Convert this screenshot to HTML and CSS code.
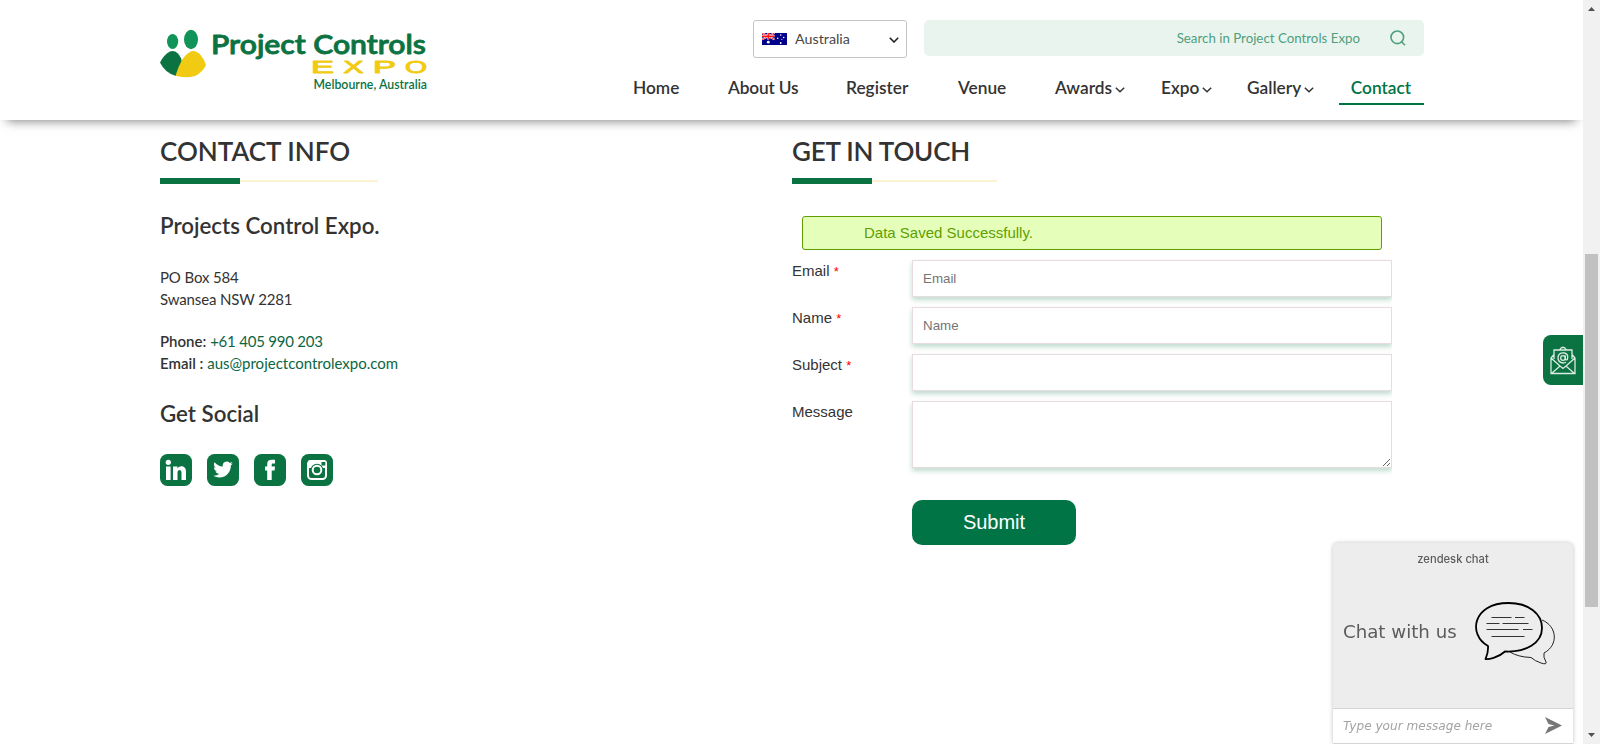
FILE: index.html
```html
<!DOCTYPE html>
<html lang="en">
<head>
<meta charset="utf-8">
<title>Project Controls Expo - Contact</title>
<link rel="stylesheet" href="styles.css">
</head>
<body>
<div class="window">
<div class="page">
  <header class="header">
    <svg class="logo" width="272" height="70" viewBox="160 25 272 70">
      <ellipse cx="172.600" cy="41.500" rx="5.600" ry="7.600" fill="#119457"/>
      <ellipse cx="191" cy="39.500" rx="7" ry="9.700" fill="#119457"/>
      <path d="M160 62.500Q164 54.500 170 51.500Q174 50 178 53.500 181.500 57.500 182 62L176 76Q165 73 160 62.500Z" fill="#0b7342"/>
      <path d="M175.500 75.800Q178 67 182 60 187 52.500 192 51Q197 50.500 201 55.500 205 60.500 206 65Q203 72 195 76 185 78.500 175.500 75.800Z" fill="#f1cb13"/>
      <text x="211" y="53.800" class="logo-name" textLength="215" lengthAdjust="spacingAndGlyphs">Project Controls</text>
      <g class="logo-expo">
        <text x="311" y="73" textLength="23" lengthAdjust="spacingAndGlyphs">E</text>
        <text x="343.500" y="73" textLength="20" lengthAdjust="spacingAndGlyphs">X</text>
        <text x="373" y="73" textLength="23" lengthAdjust="spacingAndGlyphs">P</text>
        <text x="405" y="73" textLength="22" lengthAdjust="spacingAndGlyphs">O</text>
      </g>
      <text x="313.500" y="89" class="logo-city" textLength="113.500">Melbourne, Australia</text>
    </svg>
    <div class="head-right">
      <div class="tools">
        <div class="country">
          <svg width="25" height="12" viewBox="0 0 25 12">
            <path fill="#00008b" d="M0 0h25v12H0z"/>
            <path d="M0 0l12.500 6.500M12.500 0L0 6.500" stroke="#fff" stroke-width="1.800"/>
            <path d="M0 0l12.500 6.500M12.500 0L0 6.500" stroke="#f22" stroke-width=".9"/>
            <path d="M6.200 0v6.500M0 3.200h12.500" stroke="#fff" stroke-width="2.200"/>
            <path d="M6.200 0v6.500M0 3.200h12.500" stroke="#f11" stroke-width="1.400"/>
            <g fill="#fff"><circle cx="6.300" cy="9.200" r="1.400"/><circle cx="18.700" cy="2" r=".8"/><circle cx="15.700" cy="5.200" r=".8"/><circle cx="21.700" cy="4.500" r=".8"/><circle cx="18.700" cy="10" r=".9"/><circle cx="19.900" cy="6.500" r=".5"/></g>
          </svg>
          <span>Australia</span>
          <svg class="country-arrow" width="10" height="6" viewBox="0 0 10 6"><path d="M.8.8L5 5 9.200.8" fill="none" stroke="#222" stroke-width="1.600"/></svg>
        </div>
        <div class="search">
          <span>Search in Project Controls Expo</span>
          <svg width="16" height="16" viewBox="0 0 16 16" fill="none" stroke="#4f9f7c" stroke-width="1.600"><circle cx="7.300" cy="7.300" r="6.300"/><path d="M11 11.200l4 4"/></svg>
        </div>
      </div>
      <nav class="nav">
        <a class="n-home">Home</a><a class="n-about">About Us</a><a class="n-register">Register</a><a class="n-venue">Venue</a>
        <a class="n-awards">Awards<svg class="chev" width="10" height="6" viewBox="0 0 10 6"><path d="M.8.8L5 4.800 9.200.8"/></svg></a>
        <a class="n-expo">Expo<svg class="chev" width="10" height="6" viewBox="0 0 10 6"><path d="M.8.8L5 4.800 9.200.8"/></svg></a>
        <a class="n-gallery">Gallery<svg class="chev" width="10" height="6" viewBox="0 0 10 6"><path d="M.8.8L5 4.800 9.200.8"/></svg></a>
        <a class="n-contact">Contact</a>
      </nav>
    </div>
  </header>

  <main class="content">
    <section class="info">
      <h2 class="title">CONTACT INFO</h2>
      <div class="rule rule-info"></div>
      <h3 class="sub">Projects Control Expo.</h3>
      <p class="address">PO Box 584<br>Swansea NSW 2281</p>
      <p class="reach"><b>Phone:</b> <a class="phone">+61 405 990 203</a><br><b>Email :</b> <a>aus@projectcontrolexpo.com</a></p>
      <h3 class="sub social-title">Get Social</h3>
      <div class="social">
        <svg width="32" height="32" viewBox="0 0 32 32"><rect width="32" height="32" rx="7.500" fill="#0b7342"/><g fill="#fff"><circle cx="8.300" cy="8.300" r="2.600"/><path d="M6 12.500h4.600V26H6zM13 12.500h4.400v1.900c2-3.400 8.600-3.200 8.600 3V26h-4.500v-7.300c0-3.600-4-3.400-4 0V26H13z"/></g></svg>
        <svg width="32" height="32" viewBox="0 0 32 32"><rect width="32" height="32" rx="7.500" fill="#0b7342"/><path transform="translate(6.200 5.700) scale(.82)" fill="#fff" d="M24 4.600a10 10 0 0 1-2.800.8 5 5 0 0 0 2.100-2.700c-1 .6-2 1-3.100 1.200a4.900 4.900 0 0 0-8.400 4.500A14 14 0 0 1 1.700 3.100a4.900 4.900 0 0 0 1.500 6.600A5 5 0 0 1 1 9.100a4.900 4.900 0 0 0 3.900 4.900 5 5 0 0 1-2.200.1 4.900 4.900 0 0 0 4.600 3.400A10 10 0 0 1 0 19.500a14 14 0 0 0 7.500 2.200c9.200 0 14.300-7.700 14-14.600A10 10 0 0 0 24 4.600z"/></svg>
        <svg width="32" height="32" viewBox="0 0 32 32"><rect width="32" height="32" rx="7.500" fill="#0b7342"/><path fill="#fff" d="M13.200 26V16.500H11v-4h2.200V10c0-3 1.600-4.300 4.600-4.300H21V9.500h-2c-1 0-1.300.4-1.300 1.300v1.700H21l-.4 4h-2.900V26z"/></svg>
        <svg width="32" height="32" viewBox="0 0 32 32"><rect width="32" height="32" rx="7.500" fill="#0b7342"/><rect x="7" y="7" width="18" height="18" rx="3.500" fill="none" stroke="#fff" stroke-width="2"/><path d="M6.500 9q0-3 3-3H23q3 0 3 3v5H6.500z" fill="#fff"/><rect x="20.500" y="8" width="3.800" height="3.500" fill="#0b7342"/><circle cx="16" cy="16" r="6.300" fill="#0b7342"/><circle cx="16" cy="16" r="4.300" fill="none" stroke="#fff" stroke-width="2"/></svg>
      </div>
    </section>

    <section class="touch">
      <h2 class="title title-touch">GET IN TOUCH</h2>
      <div class="rule rule-touch"></div>
      <div class="alert">Data Saved Successfully.</div>
      <form class="form">
        <label>Email <i>*</i></label><div class="field"><input type="text" placeholder="Email"></div>
        <label>Name <i>*</i></label><div class="field"><input type="text" placeholder="Name"></div>
        <label>Subject <i>*</i></label><div class="field"><input type="text"></div>
        <label>Message</label><div class="field field-area"><textarea></textarea></div>
      </form>
      <button class="submit" type="button">Submit</button>
    </section>
  </main>
</div>

<div class="scrollbar">
  <svg width="7" height="4" viewBox="0 0 7 4"><path d="M0 4l3.500-4L7 4z" fill="#505050"/></svg>
  <div class="thumb"></div>
  <svg class="down" width="7" height="4" viewBox="0 0 7 4"><path d="M0 0h7L3.500 4z" fill="#505050"/></svg>
</div>
</div>

<div class="mail-tab">
  <svg width="26" height="29" viewBox="0 0 26 29" fill="none" stroke="#dcebe3" stroke-width="1.300">
    <path d="M4 13V4h18v9M9.500 4Q13 -1.500 16.500 4M4 8.500L1 12v15.500h24V12l-3-3.500M1 12l9 8M25 12l-9 8M1.500 27.500L10 20l3 2.500 3-2.500 8.500 7.500"/>
    <circle cx="13" cy="12" r="2.300"/><path d="M15.300 9.500v3.500q.5 1.500 2 .5Q19 8 14.500 7 9 6.200 8 11q-.3 5.500 5 6 2 0 3-.7"/>
  </svg>
</div>

<aside class="chat">
  <div class="chat-brand">zendesk chat</div>
  <div class="chat-body">
    <span>Chat with us</span>
    <svg width="80" height="63" viewBox="0 0 80 63" fill="none">
      <path d="M67 18C82 24 84 43 69 51Q68 55 71 60 72 63 66 61 60 59 56 55.500 43 55 35 50" stroke="#222" stroke-width="1"/>
      <path d="M13 44C-7 33-3 1 33.500 1 54 1 67 12 67 26 67 41 51 50.500 30 49.500 23 56 13 57.500 10.500 57 12.500 52 13.500 50 13 44Z" fill="#ededed" stroke="#000" stroke-width="1.800" stroke-linejoin="round"/>
      <path d="M16.500 15.500h20M40 15.500h9.500M11.500 21.500h13M27.500 21.500h26M11.500 27.500h32M48 27.500h9.500M16.500 34.500h33" stroke="#333" stroke-width="1"/>
    </svg>
  </div>
  <div class="chat-input">
    <span>Type your message here</span>
    <svg width="17" height="17" viewBox="0 0 17 17"><path d="M0 0l17 8.500L0 17l3.500-7 6-1.500-6-1.500z" fill="#777"/></svg>
  </div>
</aside>
</body>
</html>
```
FILE: styles.css
```css
* { box-sizing: border-box; }
body { margin: 0; height: 744px; overflow: hidden; background: #fff; color: #333; font-family: Lato, sans-serif; }
.window { display: flex; height: 744px; }
.page { width: 1583px; }

.header { display: flex; justify-content: space-between; height: 120px; padding: 20px 159px 0 160px; background: #fff; box-shadow: 0 8px 10px -7px rgba(0,0,0,.5); }
.logo { margin-top: 5px; }
.logo-name { font: 600 26.500px Lato, sans-serif; fill: #0b7342; stroke: #0b7342; stroke-width: .8; stroke-linejoin: round; }
.logo-expo { font: 400 17px "Liberation Sans", sans-serif; fill: #f1cb13; stroke: #f1cb13; stroke-width: .9; stroke-linejoin: round; }
.logo-city { font: 600 12.300px Lato, sans-serif; fill: #0b7342; }

.head-right { width: 791px; }
.tools { display: flex; justify-content: flex-end; gap: 17px; }
.country { display: flex; align-items: center; width: 154px; height: 38px; padding: 0 7px 0 8px; border: 1px solid #c4c4c4; border-radius: 3px; color: #484848; font-size: 14.300px; }
.country span { margin: -1px 0 0 8px; }
.country-arrow { margin: 2px 0 0 auto; }
.search { display: flex; align-items: center; justify-content: flex-end; gap: 30px; width: 500px; height: 36px; padding-right: 18px; border-radius: 5px; background: #eaf4ef; color: #4f9f7c; font-size: 13.300px; }

.nav { display: flex; margin-top: 10px; font-size: 17.300px; font-weight: 600; line-height: 40px; white-space: nowrap; }
.nav a { height: 37px; }
.n-home { width: 95px; }
.n-about { width: 118px; letter-spacing: -.15px; }
.n-register { width: 112px; }
.n-venue { width: 97px; }
.n-awards { width: 106px; }
.n-expo { width: 86px; }
.n-gallery { width: 92px; }
.nav .n-contact { width: 85px; padding-right: 1px; color: #007445; text-align: center; border-bottom: 2px solid #007445; }
.chev { margin-left: 3px; vertical-align: 1px; fill: none; stroke: #333; stroke-width: 1.500; }

.content { display: flex; padding: 13px 0 0 160px; }
.info { width: 632px; }
.touch { width: 601px; }
.title { margin: 0; font-size: 26px; font-weight: 600; line-height: 36px; }
.title-touch { letter-spacing: -.2px; }
.rule { height: 6px; margin-top: 9px; background: linear-gradient(#0b7342, #0b7342) 0 0 / 80px 6px no-repeat, linear-gradient(#fdf3d0, #fdf3d0) 0 2px / 100% 2px no-repeat; }
.rule-info { width: 218px; }
.rule-touch { width: 205px; }
.sub { margin: 26px 0 0; font-size: 22.300px; font-weight: 600; line-height: 32px; }
.address, .reach { margin: 0; font-size: 15px; line-height: 22px; }
.address { margin-top: 24px; letter-spacing: -.14px; }
.reach { margin-top: 20px; }
.reach b { font-weight: 600; }
.reach a { color: #0b6643; }
.reach .phone { letter-spacing: -.22px; }
.social-title { margin-top: 24px; }
.social { display: flex; gap: 15px; margin-top: 24px; }

.alert { width: 580px; height: 34px; margin: 32px 0 0 10px; padding-left: 61px; border: 1px solid #609e00; border-radius: 3px; background: #e5ffba; color: #609e00; font: 15px/32px "Liberation Sans", Arial, sans-serif; }
.form { display: grid; grid-template-columns: 120px 481px; font: 15px/21px "Liberation Sans", Arial, sans-serif; }
.form label { padding-top: 10px; }
.form i { color: #f00; font-size: 13px; font-style: normal; }
.field { height: 47px; padding: 10px 1px 0 0; clip-path: inset(0 1px -12px -10px); }
.field-area { height: 78px; }
.field input, .field textarea { display: block; width: 480px; margin: 0; padding: 0 10px; border: 1px solid #e7dcde; border-radius: 0; outline: 0; background: #fff; box-shadow: 0 3px 5px rgba(0,116,69,.25); font: 13.333px "Liberation Sans", Arial, sans-serif; }
.field input { height: 37px; }
.field textarea { height: 67px; }
.form ::placeholder { color: #757575; }
.submit { display: block; width: 164px; height: 45px; margin: 31px 0 0 120px; padding: 0; border: 0; border-radius: 10px; background: #007445; color: #fff; font: 20px "Liberation Sans", Arial, sans-serif; }

.scrollbar { display: flex; flex-direction: column; align-items: center; width: 17px; height: 744px; padding: 7px 0 6px; background: #f1f1f1; }
.thumb { width: 13px; height: 353px; margin-top: 243px; background: #c1c1c1; }
.down { margin-top: auto; margin-bottom: 1px; }

.mail-tab { position: fixed; right: 17px; top: 335px; display: flex; align-items: center; justify-content: center; width: 40px; height: 50px; border-radius: 8px 0 0 8px; background: #0b7342; }
.chat { position: fixed; right: 27px; bottom: 0; width: 240px; height: 201px; border-radius: 5px 5px 0 0; background: #ededed; box-shadow: 0 0 4px rgba(0,0,0,.25); color: #5c5c5c; overflow: hidden; }
.chat-brand { height: 30px; font: 500 11.200px/32px Inter, sans-serif; text-align: center; }
.chat-body { display: flex; align-items: center; justify-content: space-between; height: 135px; padding: 0 18px 18px 10px; font: 18.200px "DejaVu Sans", sans-serif; }
.chat-body svg { margin-top: 3px; }
.chat-input { display: flex; align-items: center; justify-content: space-between; height: 36px; padding: 0 11px 0 10px; border-top: 1px solid #d5d5d5; border-bottom: 1px solid #d5d5d5; background: #fff; color: #a3a3a3; font: italic 12.100px/17px "DejaVu Sans", sans-serif; }
.chat-input span { margin-top: 1px; }
.chat-input svg { margin-top: -2px; }
```
